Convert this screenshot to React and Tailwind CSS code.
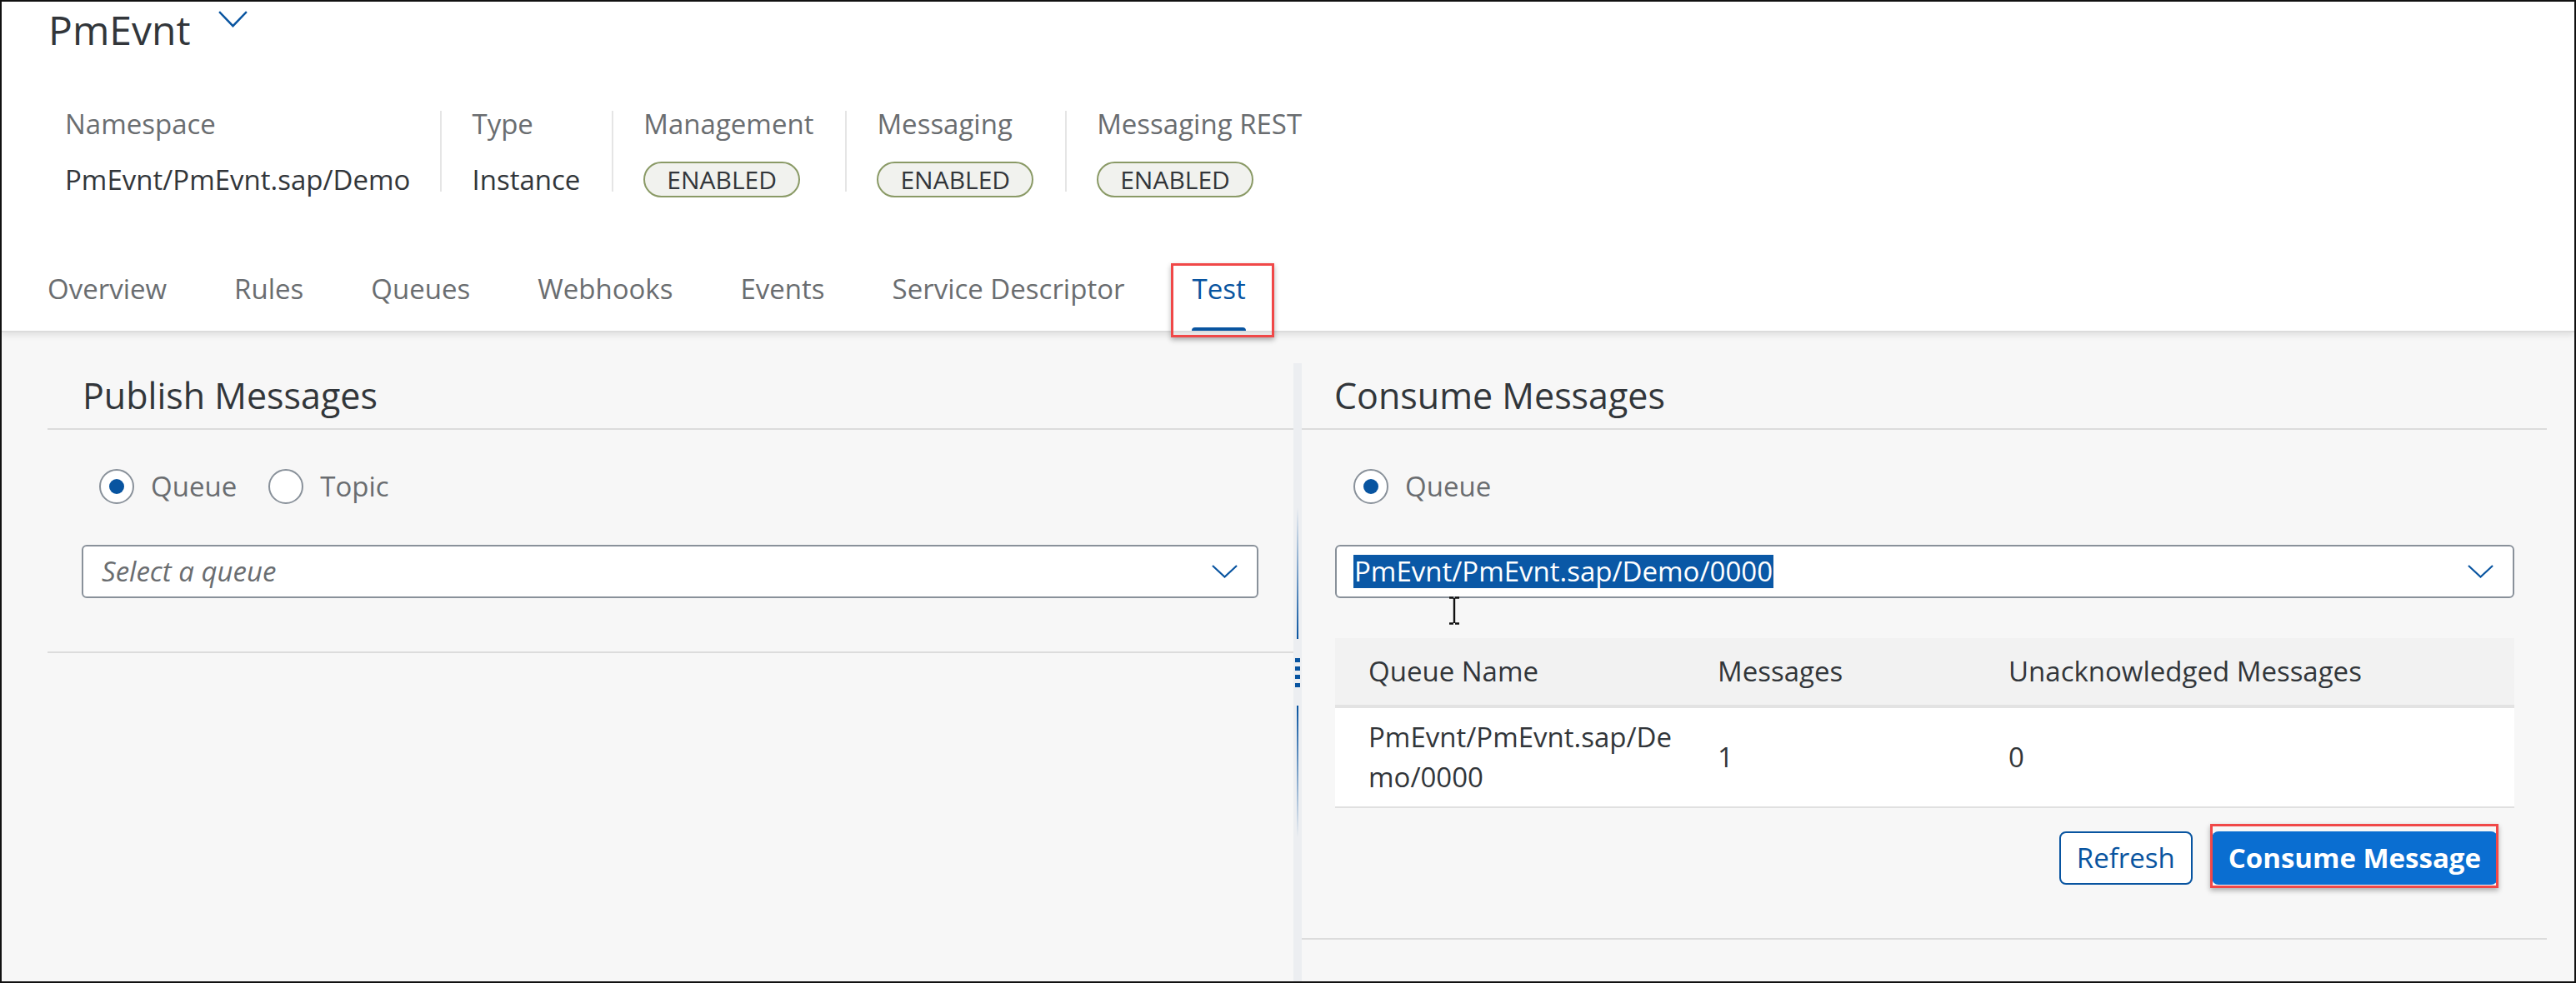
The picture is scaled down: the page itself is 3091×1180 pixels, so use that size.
import React from 'react';

const Chevron = ({ className }) => (
  <svg viewBox="0 0 32 17" className={className} fill="none" preserveAspectRatio="none">
    <polyline points="1,1 16,15.5 31,1" stroke="currentColor" strokeWidth="2.2" />
  </svg>
);

const Radio = ({ label, checked }) => (
  <div className="flex items-center">
    <span className="w-[42px] h-[42px] rounded-full border-2 border-[#89919a] bg-white flex items-center justify-center">
      {checked && <span className="w-[18px] h-[18px] rounded-full bg-[#0854a0]" />}
    </span>
    <span className="ml-[20px] text-[33px] leading-[42px] text-[#6a6d70]">{label}</span>
  </div>
);

const Badge = () => (
  <span className="inline-flex items-center h-[43px] px-[26px] rounded-full border-2 border-[#8a9a66] bg-[#f1f2ee] text-[30px] leading-[39px] text-[#32363a]">
    ENABLED
  </span>
);

const Divider = () => <div className="w-[2px] h-[97px] bg-[#e5e5e5] shrink-0" />;

const InfoItem = ({ label, value, badge, first }) => (
  <div className={first ? 'pr-[36px]' : 'pl-[36px] pr-[38px]'}>
    <div className="text-[33px] leading-[32px] text-[#6a6d70]">{label}</div>
    <div className="mt-[28px] h-[44px] flex items-center">
      {badge ? <Badge /> : <span className="text-[33px] leading-[48px] text-[#32363a] translate-y-[1px]">{value}</span>}
    </div>
  </div>
);

const tabs = ['Overview', 'Rules', 'Queues', 'Webhooks', 'Events', 'Service Descriptor', 'Test'];

const IBeam = () => (
  <svg viewBox="0 0 20 34" className="w-[20px] h-[34px]" fill="none">
    <path d="M4 1.5h5M11 1.5h5M10 2v30M4 32.5h5M11 32.5h5" stroke="#111" strokeWidth="2.4" />
  </svg>
);

export default function App() {
  return (
    <div className="w-[3091px] h-[1180px] border-2 border-[#111] bg-[#f7f7f7] flex flex-col overflow-hidden font-['Open_Sans',sans-serif]">
      {/* Header */}
      <header className="relative z-10 bg-white border-b-2 border-[#dcdcdc] shadow-[0_3px_8px_rgba(0,0,0,0.10)]">
        <div className="flex items-start pl-[56px] pt-[4px]">
          <h1 className="text-[48px] leading-[60px] text-[#32363a]">PmEvnt</h1>
          <Chevron className="ml-[33px] mt-[7px] w-[35px] h-[20px] text-[#0854a0]" />
        </div>

        <div className="mt-[67px] pl-[76px] flex items-start">
          <InfoItem first label="Namespace" value="PmEvnt/PmEvnt.sap/Demo" />
          <Divider />
          <InfoItem label="Type" value="Instance" />
          <Divider />
          <InfoItem label="Management" badge />
          <Divider />
          <InfoItem label="Messaging" badge />
          <Divider />
          <InfoItem label="Messaging REST" badge />
        </div>

        <nav className="mt-[90px] pl-[46px] flex gap-[63px]">
          {tabs.map((t) => {
            const active = t === 'Test';
            return (
              <div key={t} className="relative px-[9px] flex flex-col">
                <span className={`text-[33px] leading-[40px] ${active ? 'text-[#0854a0]' : 'text-[#6a6d70]'}`}>{t}</span>
                <span className={`mt-[26px] h-[4px] rounded-t-[4px] ${active ? 'bg-[#0854a0]' : 'bg-transparent'}`} />
                {active && (
                  <span className="absolute -left-[16px] -right-[25px] -top-[11px] -bottom-[8px] border-[3px] border-[#f04848] shadow-[0_3px_6px_rgba(0,0,0,0.3)]" />
                )}
              </div>
            );
          })}
        </nav>
      </header>

      {/* Body */}
      <main className="flex-1 flex items-start pt-[37px] pl-[55px] pr-[33px]">
        {/* Publish */}
        <section className="w-[1495px]">
          <h2 className="h-[80px] border-b-2 border-[#dcdcdc] pl-[42px] text-[43px] leading-[78px] text-[#32363a]">Publish Messages</h2>
          <div className="pl-[41px] pr-[42px] pb-[64px] border-b-2 border-[#dcdcdc]">
            <div className="mt-[47px] h-[42px] pl-[21px] flex items-center gap-[38px]">
              <Radio label="Queue" checked />
              <Radio label="Topic" />
            </div>
            <div className="mt-[49px] h-[64px] bg-white border-2 border-[#89919a] rounded-[6px] flex items-center justify-between pl-[22px] pr-[23px]">
              <span className="text-[33px] italic text-[#6a6d70]">Select a queue</span>
              <Chevron className="w-[31px] h-[16px] text-[#0854a0]" />
            </div>
          </div>
        </section>

        {/* Splitter */}
        <div className="self-stretch w-[10px] bg-[#eceef1] flex flex-col items-center justify-center">
          <div className="w-[2px] h-[158px] bg-gradient-to-b from-transparent to-[#0854a0]" />
          <div className="mt-[23px] flex flex-col gap-[5px]">
            <span className="w-[6px] h-[5px] bg-[#0854a0]" />
            <span className="w-[6px] h-[5px] bg-[#0854a0]" />
            <span className="w-[6px] h-[5px] bg-[#0854a0]" />
            <span className="w-[6px] h-[5px] bg-[#0854a0]" />
          </div>
          <div className="mt-[22px] w-[2px] h-[158px] bg-gradient-to-b from-[#0854a0] to-transparent" />
        </div>

        {/* Consume */}
        <section className="flex-1 border-b-2 border-[#dcdcdc]">
          <h2 className="h-[80px] border-b-2 border-[#dcdcdc] pl-[39px] text-[43px] leading-[78px] text-[#32363a]">Consume Messages</h2>
          <div className="pl-[40px] pr-[39px] pb-[64px]">
            <div className="mt-[47px] h-[42px] pl-[22px] flex items-center">
              <Radio label="Queue" checked />
            </div>
            <div className="relative mt-[49px] h-[64px] bg-white border-2 border-[#89919a] rounded-[6px] flex items-center justify-between pl-[20px] pr-[23px]">
              <span className="h-[40px] px-[1px] bg-[#0a58a6] text-white text-[33px] leading-[40px]">PmEvnt/PmEvnt.sap/Demo/0000</span>
              <Chevron className="w-[31px] h-[16px] text-[#0854a0]" />
              <div className="absolute left-[131px] top-[60px]">
                <IBeam />
              </div>
            </div>

            <div className="mt-[48px] text-[33px] text-[#32363a]">
              <div className="h-[84px] grid grid-cols-[419px_349px_1fr] items-center bg-[#f2f2f2] border-b-4 border-[#e3e3e3]">
                <span className="pl-[40px] leading-[80px]">Queue Name</span>
                <span className="pl-[40px] leading-[80px]">Messages</span>
                <span className="pl-[40px] leading-[80px]">Unacknowledged Messages</span>
              </div>
              <div className="h-[120px] grid grid-cols-[419px_349px_1fr] items-center bg-white border-b-2 border-[#e0e0e0]">
                <span className="pl-[40px] leading-[48px]">PmEvnt/PmEvnt.sap/De<br />mo/0000</span>
                <span className="pl-[40px] leading-[48px]">1</span>
                <span className="pl-[40px] leading-[48px]">0</span>
              </div>
            </div>

            <div className="mt-[28px] flex justify-end gap-[23px] pr-[20px]">
              <button className="h-[64px] px-[19px] rounded-[8px] border-2 border-[#0854a0] bg-white text-[33px] text-[#0854a0]">
                Refresh
              </button>
              <div className="relative">
                <button className="h-[64px] px-[20px] rounded-[8px] bg-[#0a6ed1] text-[33px] font-bold text-white">
                  Consume Message
                </button>
                <span className="absolute -left-[2px] -right-[1px] -top-[9px] -bottom-[4px] border-[3px] border-[#f04848] shadow-[0_3px_6px_rgba(0,0,0,0.3)]" />
              </div>
            </div>
          </div>
        </section>
      </main>
    </div>
  );
}
